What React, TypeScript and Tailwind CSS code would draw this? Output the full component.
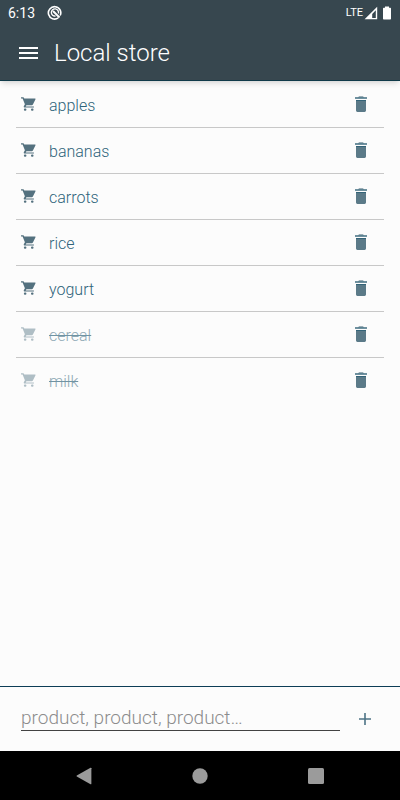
import * as React from "react";

type Product = {
  name: string;
  done?: boolean;
};

const PRODUCTS: Product[] = [
  { name: "apples" },
  { name: "bananas" },
  { name: "carrots" },
  { name: "rice" },
  { name: "yogurt" },
  { name: "cereal", done: true },
  { name: "milk", done: true },
];

function CartIcon(): React.JSX.Element {
  return (
    <svg viewBox="0 0 15 14" className="h-3.5 w-[15px] fill-current" aria-hidden="true">
      <path d="M0 .2h2.500l.8 1.400h10.600c.5 0 .8.5.5.9l-2.500 5c-.2.4-.6.7-1.100.7H5.400l-.7 1.300h8.200v1.100H4c-1 0-1.600-.9-1.100-1.700l1-1.600L1.600 1.500H0z" />
      <rect x="2.900" y="11.500" width="2.500" height="2.300" rx="1" />
      <rect x="10" y="11.500" width="2.500" height="2.300" rx="1" />
    </svg>
  );
}

function TrashIcon(): React.JSX.Element {
  return (
    <svg viewBox="0 0 12 16" className="h-4 w-3" aria-hidden="true">
      <path d="M3 1.500 4 .3h4l1 1.200z" fill="#7d95a1" />
      <path d="M0 1.300h12v1.400H0z" fill="#336478" />
      <path d="M1 4h10v10.600a1.400 1.400 0 0 1-1.400 1.400H2.400A1.400 1.400 0 0 1 1 14.600z" fill="#5b7a88" />
      <path d="M1 4h10v1H1z" fill="#336478" />
    </svg>
  );
}

function StatusBar(): React.JSX.Element {
  return (
    <div className="flex h-6 items-center justify-between px-2 font-['Roboto',sans-serif] font-normal text-white">
      <div className="flex items-center gap-3 pt-0.5">
        <span className="text-sm leading-5">6:13</span>
        <svg viewBox="0 0 16 16" className="size-4" fill="none" stroke="currentColor" aria-hidden="true">
          <path d="M11.200 12.900A6.200 6.200 0 1 1 13.200 10.500" strokeWidth="1.600" />
          <path d="M8.500 11A3.600 3.600 0 1 1 11.400 8.500" strokeWidth="1.400" />
          <path d="m6 6 6.500 6.500" strokeWidth="1.900" />
        </svg>
      </div>
      <div className="flex items-center pt-0.5">
        <span className="text-[11px] leading-4">LTE</span>
        <svg viewBox="0 0 14 14" className="ml-px size-3.5" fill="currentColor" aria-hidden="true">
          <path fillRule="evenodd" d="M13.200.8v12.400H.6zM11.800 4.200 8.200 7.900v4h3.600z" />
        </svg>
        <svg viewBox="0 0 10 14" className="ml-1 h-3.5 w-2.5" fill="currentColor" aria-hidden="true">
          <path d="M3 .4h4v1.300h1.300c.4 0 .7.3.7.7v10.400c0 .4-.3.7-.7.7H1.700a.7.7 0 0 1-.7-.7V2.400c0-.4.3-.7.7-.7H3z" />
        </svg>
      </div>
    </div>
  );
}

function ProductRow({ product }: { product: Product }): React.JSX.Element {
  return (
    <li className="flex h-[46px] items-center border-b border-[#c8c8c8] pr-4 pl-[5px] last:border-transparent">
      <span className={product.done ? "pb-0.5 text-[#afbec5]" : "pb-0.5 text-[#54717f]"}>
        <CartIcon />
      </span>
      <span
        className={
          product.done
            ? "ml-[13px] flex-1 pt-0.5 text-[#8fa9b5] line-through decoration-[#6f93a3]"
            : "ml-[13px] flex-1 pt-0.5 text-[#2f647b]"
        }
      >
        {product.name}
      </span>
      <button type="button" aria-label={`Delete ${product.name}`} className="mr-px pb-0.5">
        <TrashIcon />
      </button>
    </li>
  );
}

export default function App(): React.JSX.Element {
  return (
    <div className="flex min-h-screen flex-col bg-[#fcfcfc] font-['Roboto',sans-serif] font-light">
      <header className="border-b border-[#103a49] bg-[#37474f] text-white shadow-md">
        <StatusBar />
        <div className="flex h-14 items-center gap-4 pt-0.5 pl-[19px]">
          <button type="button" aria-label="Open menu">
            <svg viewBox="0 0 19 12" className="h-3 w-[19px] fill-current" aria-hidden="true">
              <path d="M0 0h19v2H0zM0 5h19v2H0zM0 10h19v2H0z" />
            </svg>
          </button>
          <h1 className="text-2xl">Local store</h1>
        </div>
      </header>

      <main className="flex-1 px-4">
        <ul className="pt-px text-base">
          {PRODUCTS.map((product) => (
            <ProductRow key={product.name} product={product} />
          ))}
        </ul>
      </main>

      <form
        className="flex h-[65px] items-center gap-[17px] border-t border-[#0d3d56] pr-[27px] pl-[21px]"
        onSubmit={(event) => event.preventDefault()}
      >
        <input
          type="text"
          aria-label="Products to add"
          placeholder="product, product, product…"
          className="h-6 min-w-0 flex-1 border-b border-[#424242] bg-transparent text-[19px] text-[#2f647b] outline-none placeholder:text-[#8c8c8c]"
        />
        <button type="submit" aria-label="Add products">
          <svg viewBox="0 0 16 16" className="size-4" fill="none" stroke="#4d7385" strokeWidth="1.600" aria-hidden="true">
            <path d="M8 2v12M2 8h12" />
          </svg>
        </button>
      </form>

      <nav className="flex h-[49px] items-center justify-around bg-black px-[26px] text-[#9b9b9b]">
        <button type="button" aria-label="Back">
          <svg viewBox="0 0 16 18" className="h-[18px] w-4 fill-current" aria-hidden="true">
            <path d="M14.500.8c.4-.2.9 0 .9.5v15.400c0 .5-.5.7-.9.5L.8 9.500a.6.6 0 0 1 0-1z" />
          </svg>
        </button>
        <button type="button" aria-label="Home">
          <svg viewBox="0 0 16 16" className="size-4 fill-current" aria-hidden="true">
            <circle cx="8" cy="8" r="7.700" />
          </svg>
        </button>
        <button type="button" aria-label="Recent apps">
          <svg viewBox="0 0 16 16" className="size-4 fill-current" aria-hidden="true">
            <rect width="16" height="16" rx="1.500" />
          </svg>
        </button>
      </nav>
    </div>
  );
}
